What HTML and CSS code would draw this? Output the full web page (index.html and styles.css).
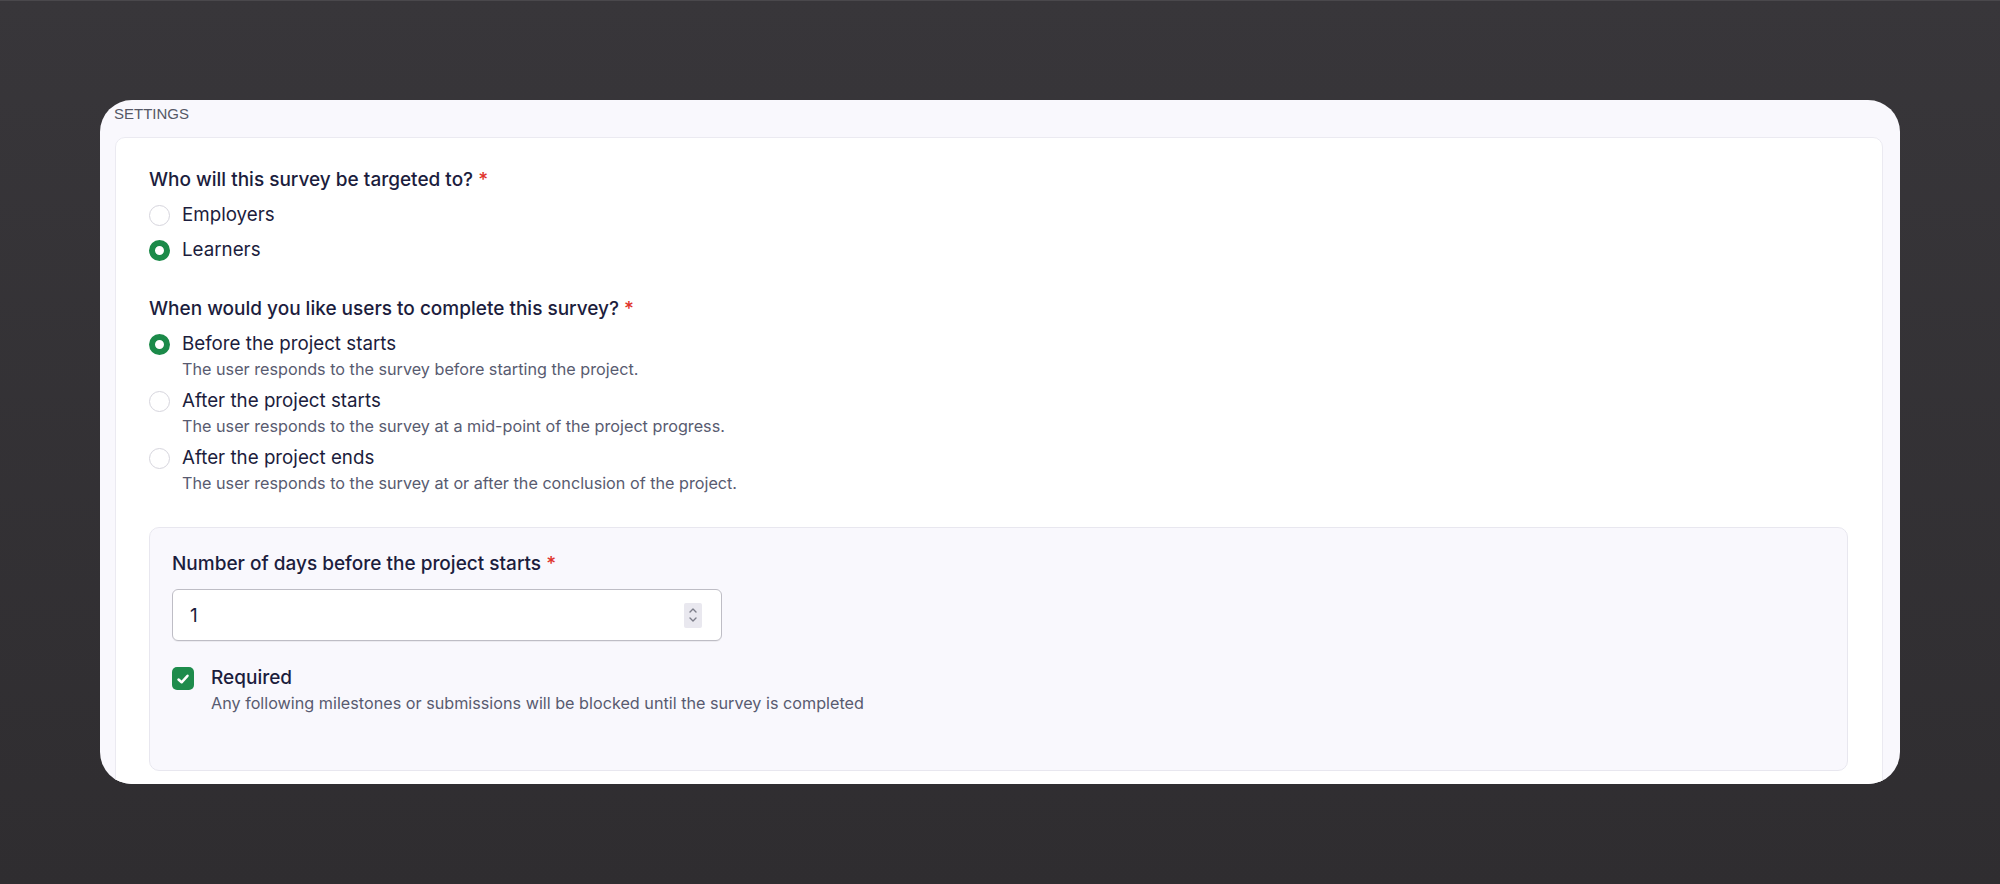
FILE: index.html
```html
<!DOCTYPE html>
<html lang="en">
<head>
	<meta charset="UTF-8">
	<meta name="viewport" content="width=device-width, initial-scale=1.0">
	<title>Survey settings</title>
	<link rel="stylesheet" href="styles.css">
</head>

<body>
	<div class="stage">
		<div class="card">
			<div class="card-title">SETTINGS</div>

			<div class="panel">
				<div class="field">
					<div class="field-label">Who will this survey be targeted to? <span class="req">*</span></div>
					<div class="options">
						<label class="option">
							<input type="radio" name="target" value="employers">
							<span class="option-text">
								<span class="option-title">Employers</span>
							</span>
						</label>
						<label class="option">
							<input type="radio" name="target" value="learners" checked>
							<span class="option-text">
								<span class="option-title">Learners</span>
							</span>
						</label>
					</div>
				</div>

				<div class="field">
					<div class="field-label">When would you like users to complete this survey? <span class="req">*</span></div>
					<div class="options">
						<label class="option">
							<input type="radio" name="timing" value="before" checked>
							<span class="option-text">
								<span class="option-title">Before the project starts</span>
								<span class="option-desc">The user responds to the survey before starting the project.</span>
							</span>
						</label>
						<label class="option">
							<input type="radio" name="timing" value="during">
							<span class="option-text">
								<span class="option-title">After the project starts</span>
								<span class="option-desc">The user responds to the survey at a mid-point of the project progress.</span>
							</span>
						</label>
						<label class="option">
							<input type="radio" name="timing" value="after">
							<span class="option-text">
								<span class="option-title">After the project ends</span>
								<span class="option-desc">The user responds to the survey at or after the conclusion of the project.</span>
							</span>
						</label>
					</div>
				</div>

				<div class="subpanel">
					<div class="field-label">Number of days before the project starts <span class="req">*</span></div>
					<div class="number-input">
						<input type="text" value="1">
						<span class="spinner">
							<svg width="10" height="20" viewBox="0 0 10 20" fill="none" stroke="#7d7e8a" stroke-width="1.4" stroke-linecap="round" stroke-linejoin="round">
								<path d="M2 7 L5 4 L8 7" />
								<path d="M2 13 L5 16 L8 13" />
							</svg>
						</span>
					</div>

					<label class="check-row">
						<span class="checkbox">
							<svg width="16" height="16" viewBox="0 0 16 16" fill="none" stroke="#fff" stroke-width="2.5" stroke-linecap="round" stroke-linejoin="round">
								<path d="M3.5 8.5 L6.6 11.3 L12.5 4.8" />
							</svg>
						</span>
						<span class="option-text">
							<span class="check-title">Required</span>
							<span class="option-desc">Any following milestones or submissions will be blocked until the survey is completed</span>
						</span>
					</label>
				</div>
			</div>
		</div>
	</div>
</body>

</html>
```

FILE: styles.css
```css
body,
html {
	margin: 0;
	padding: 0;
}

html {
	overflow: hidden;
}

body {
	min-height: 884px;
	background: linear-gradient(#38363a, #2f2d30);
	border-top: 1px solid #4a484c;
	font-family: "Inter", sans-serif;
	color: #1c1d3d;
}

*,
*::after,
*::before {
	box-sizing: border-box;
}

.stage {
	padding: 99px 100px 0;
}

.card {
	height: 684px;
	padding: 5px 17px 0 15px;
	background-color: #f9f8fd;
	border-radius: 32px;
	overflow: hidden;
}

.card-title {
	margin-left: -1px;
	font-family: "Liberation Sans", Arial, sans-serif;
	font-size: 15px;
	line-height: 17px;
	color: #555866;
}

.panel {
	margin-top: 15px;
	padding: 30px 34px 60px 33px;
	background-color: #fff;
	border: 1px solid #ebeaf1;
	border-radius: 10px;
}

.field + .field {
	margin-top: 35px;
}

.field-label {
	font-size: 19px;
	font-weight: 500;
	line-height: 24px;
}

.req {
	color: #e0332b;
}

.options {
	margin-top: 11px;
	display: flex;
	flex-direction: column;
	gap: 11px;
}

.field:nth-child(2) .options {
	margin-top: 11px;
	gap: 10px;
}

.option,
.check-row {
	display: flex;
	align-items: flex-start;
	gap: 12px;
	cursor: pointer;
}

.option-text {
	display: flex;
	flex-direction: column;
	gap: 3px;
}

.option-title {
	font-size: 18.75px;
	line-height: 24px;
}

.option-desc {
	font-size: 16.2px;
	line-height: 20px;
	color: #585b70;
}

/* radios */
.option input {
	appearance: none;
	-webkit-appearance: none;
	margin: 2px 0 0;
	width: 21px;
	height: 21px;
	flex: 0 0 21px;
	border: 1.5px solid #d6d5dd;
	border-radius: 50%;
	background: #fff;
}

.option input:checked {
	border: 6px solid #1b8a49;
}

/* number of days */
.subpanel {
	margin-top: 34px;
	padding: 24px 22px 57px;
	background-color: #f9f8fd;
	border: 1px solid #e8e7ef;
	border-radius: 10px;
}

.number-input {
	margin-top: 13px;
	width: 550px;
	height: 52px;
	display: flex;
	align-items: center;
	padding: 0 19px 0 17px;
	background: #fff;
	border: 1px solid #bebdc5;
	border-radius: 6px;
	box-shadow: 0 1px 0 rgba(0, 0, 0, 0.05);
}

.number-input input {
	flex: 1;
	border: 0;
	padding: 0;
	outline: none;
	font-family: "Inter", sans-serif;
	font-size: 19px;
	color: #1c1d3d;
	background: transparent;
}

.spinner {
	width: 18px;
	height: 25px;
	display: flex;
	align-items: center;
	justify-content: center;
	background-color: #e9e8ef;
	border-radius: 2px;
}

.check-row {
	margin-top: 25px;
	gap: 17px;
}

.checkbox {
	margin-top: 1px;
	width: 22px;
	height: 23px;
	flex: 0 0 22px;
	display: flex;
	align-items: center;
	justify-content: center;
	background-color: #1e8c4c;
	border-radius: 5px;
}

.check-title {
	font-size: 19px;
	font-weight: 500;
	line-height: 24px;
}
```
